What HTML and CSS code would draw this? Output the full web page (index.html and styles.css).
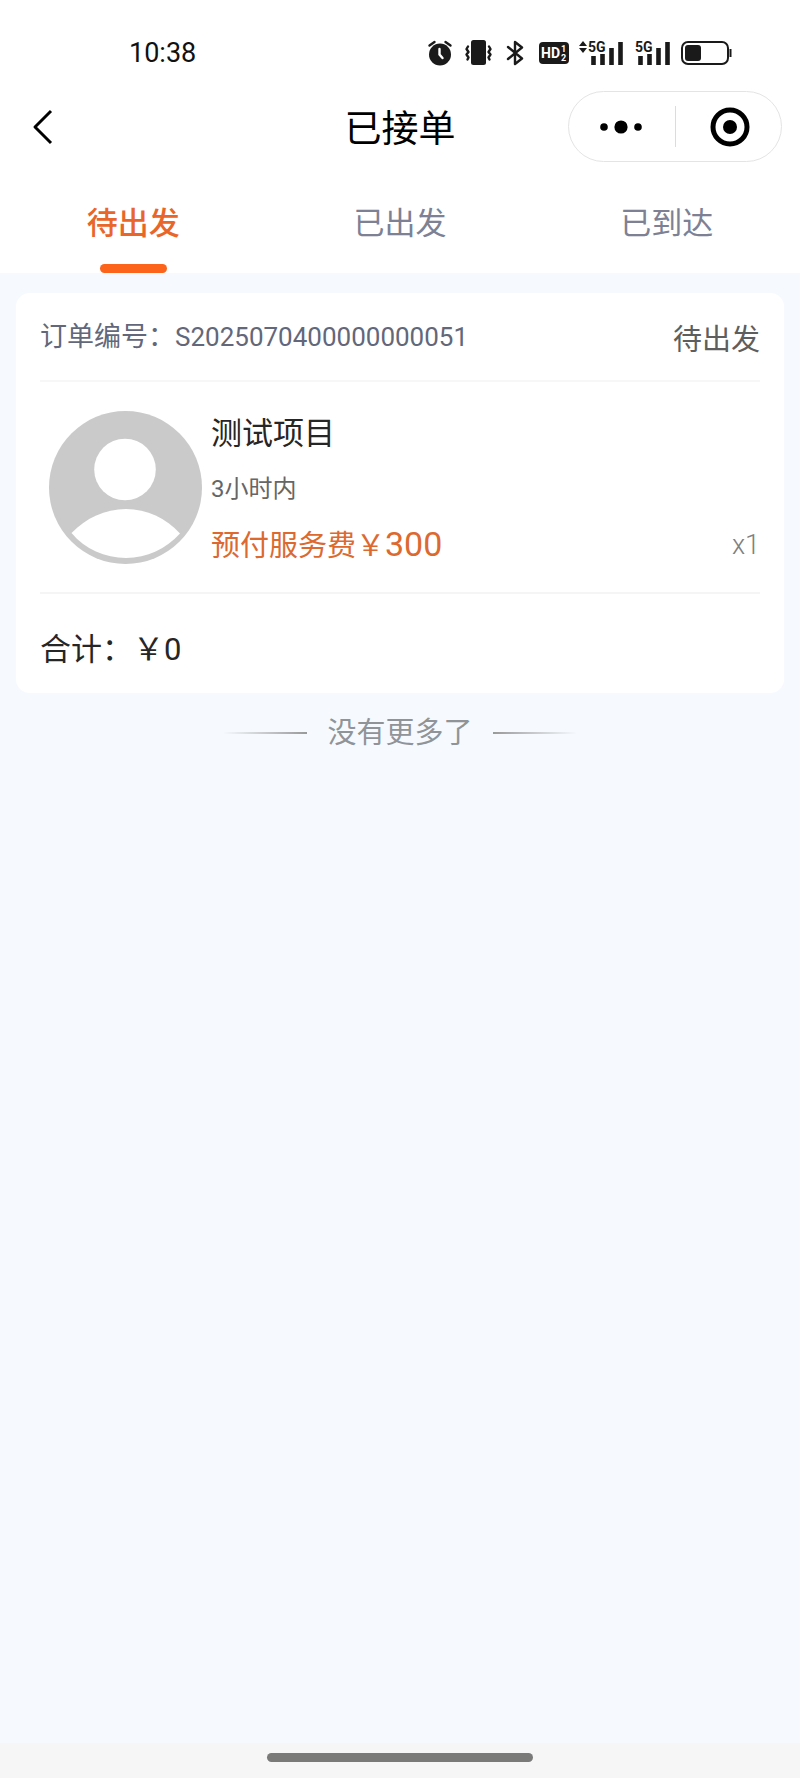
FILE: index.html
```html
<!DOCTYPE html>
<html lang="zh-CN">
<head>
<meta charset="utf-8">
<meta name="viewport" content="width=device-width, initial-scale=1">
<title>已接单</title>
<link rel="stylesheet" href="styles.css">
</head>
<body>
<div class="status-bar">
  <time class="clock">10:38</time>
  <div class="status-icons">
    <svg class="icon-alarm" width="24" height="26" viewBox="0 0 24 26" aria-hidden="true">
      <circle cx="12" cy="14.500" r="11" fill="#1a1a1a"/>
      <path d="M1.500 5.500 6.500 2M22.500 5.500 17.500 2" stroke="#1a1a1a" stroke-width="2.400" stroke-linecap="round"/>
      <path d="M11.500 9v5.500l3 3.500" stroke="#fff" stroke-width="2.400" fill="none" stroke-linecap="round"/>
    </svg>
    <svg class="icon-vibrate" width="27" height="26" viewBox="0 0 27 26" aria-hidden="true">
      <rect x="6" y="0" width="15" height="25" rx="2.500" fill="#1a1a1a"/>
      <path d="M3 6.500 1.500 9 3.500 12 1.500 14.500 3.500 17.500 2.500 19.500M24 6.500l1.500 2.500-2 3 2 2.500-2 3 1 2" stroke="#1a1a1a" stroke-width="2.400" fill="none" stroke-linecap="round" stroke-linejoin="round"/>
    </svg>
    <svg class="icon-bluetooth" width="18" height="26" viewBox="0 0 18 26" aria-hidden="true">
      <path d="M2 7 16 18.500 9 24V2l7 5.500L2 19" stroke="#1a1a1a" stroke-width="2.400" fill="none" stroke-linecap="round" stroke-linejoin="round"/>
    </svg>
    <svg class="icon-hd" width="30" height="22" viewBox="0 0 30 22" aria-hidden="true">
      <rect width="30" height="22" rx="4" fill="#1a1a1a"/>
      <text class="hd-text" x="2" y="16">HD</text>
      <text class="hd-digit" x="22" y="10">1</text>
      <text class="hd-digit" x="22" y="19">2</text>
    </svg>
    <svg class="icon-signal-first" width="45" height="25" viewBox="0 0 45 25" aria-hidden="true">
      <path d="M0 5 4 0 8 5ZM0 7 4 12 8 7Z" fill="#1a1a1a"/>
      <text class="net-text" x="9" y="11">5G</text>
      <path d="M14.500 15v9M23.500 13v11M32.500 7v17M41.500 1v23" stroke="#1a1a1a" stroke-width="4.600"/>
    </svg>
    <svg class="icon-signal-second" width="36" height="25" viewBox="0 0 36 25" aria-hidden="true">
      <text class="net-text" x="0" y="11">5G</text>
      <path d="M5.500 15v9M14.500 13v11M23.500 7v17M32.500 1v23" stroke="#1a1a1a" stroke-width="4.600"/>
    </svg>
    <svg class="icon-battery" width="51" height="24" viewBox="0 0 51 24" aria-hidden="true">
      <rect x="1" y="1" width="46" height="22" rx="6" fill="none" stroke="#1a1a1a" stroke-width="2"/>
      <rect x="4" y="4" width="16" height="16" rx="3" fill="#1a1a1a"/>
      <path d="M49.500 8v8" stroke="#1a1a1a" stroke-width="2"/>
    </svg>
  </div>
</div>

<header class="nav-bar">
  <button class="back" type="button" aria-label="返回">
    <svg width="20" height="34" viewBox="0 0 20 34" aria-hidden="true"><path d="M18 1 2 17l16 16" fill="none" stroke="#000" stroke-width="3" stroke-linejoin="round"/></svg>
  </button>
  <h1 class="title">已接单</h1>
  <div class="capsule">
    <button class="capsule-button" type="button" aria-label="更多">
      <svg width="42" height="14" viewBox="0 0 42 14" aria-hidden="true"><circle cx="4" cy="7" r="3.800"/><circle cx="21" cy="7" r="6.600"/><circle cx="38" cy="7" r="3.800"/></svg>
    </button>
    <button class="capsule-button" type="button" aria-label="关闭">
      <svg width="40" height="40" viewBox="0 0 40 40" aria-hidden="true"><circle cx="20" cy="20" r="17" fill="none" stroke="#000" stroke-width="5"/><circle cx="20" cy="20" r="7"/></svg>
    </button>
  </div>
</header>

<nav class="tabs">
  <button class="tab active" type="button">待出发</button>
  <button class="tab" type="button">已出发</button>
  <button class="tab" type="button">已到达</button>
</nav>

<main class="content">
  <article class="card">
    <div class="order-head">
      <span class="order-label">订单编号：<span class="order-number">S2025070400000000051</span></span>
      <span class="order-state">待出发</span>
    </div>
    <div class="order-body">
      <svg class="avatar" width="153" height="153" viewBox="0 0 153 153" role="img" aria-label="头像">
        <circle cx="76.500" cy="76.500" r="76.500" fill="#cacaca"/>
        <circle cx="76" cy="58.500" r="30.800" fill="#fff"/>
        <path d="M22.500 122C37 107 56 98 77 98s40 9 54 24.500C117 138 98 147 77 147s-41-9-54.500-25Z" fill="#fff"/>
      </svg>
      <div class="details">
        <h2 class="name">测试项目</h2>
        <p class="duration">3小时内</p>
        <div class="price-row">
          <p class="price">预付服务费￥<span class="amount">300</span></p>
          <span class="count">x1</span>
        </div>
      </div>
    </div>
    <p class="total">合计：￥0</p>
  </article>
  <p class="end">没有更多了</p>
</main>

<footer class="home-area"><div class="home-pill"></div></footer>
</body>
</html>
```
FILE: styles.css
```css
* {
  box-sizing: border-box;
}

body {
  margin: 0;
  min-height: 100vh;
  display: flex;
  flex-direction: column;
  background: #f6faff;
  color: #262626;
  font-family: Roboto, "Noto Sans CJK SC", sans-serif;
}

h1,
h2,
p {
  margin: 0;
  font-weight: 400;
}

button {
  padding: 0;
  border: 0;
  background: none;
  font: inherit;
  color: inherit;
}

svg {
  display: block;
  flex: none;
  overflow: visible;
}

.status-bar {
  display: flex;
  align-items: center;
  justify-content: space-between;
  height: 89px;
  padding: 17px 68px 0 129px;
  background: #fff;
}

.clock {
  font-size: 27px;
  color: #111;
}

.status-icons {
  display: flex;
  align-items: center;
}

.icon-vibrate {
  margin-left: 13px;
}

.icon-bluetooth {
  margin-left: 14px;
}

.icon-hd {
  margin-left: 15px;
}

.icon-signal-first {
  margin-left: 10px;
}

.icon-signal-second {
  margin-left: 11px;
}

.icon-battery {
  margin-left: 10px;
}

.hd-text,
.hd-digit {
  fill: #fff;
  font-weight: 700;
  font-size: 14px;
}

.hd-digit {
  font-size: 9px;
}

.net-text {
  fill: #1a1a1a;
  font-weight: 700;
  font-size: 14px;
}

.nav-bar {
  display: grid;
  grid-template-columns: 1fr auto 1fr;
  align-items: center;
  height: 75px;
  padding: 0 18px 0 33px;
  background: #fff;
}

.back {
  justify-self: start;
}

.title {
  padding: 6px 15px 0 0;
  font-size: 37px;
  line-height: 48px;
  color: #000;
}

.capsule {
  justify-self: end;
  display: grid;
  grid-template-columns: 1fr 1fr;
  width: 214px;
  height: 71px;
  border: 1px solid #e4e4e4;
  border-radius: 36px;
}

.capsule-button {
  display: flex;
  align-items: center;
  justify-content: center;
  padding-right: 2px;
}

.capsule-button + .capsule-button {
  margin: 14px 0;
  padding: 0 0 0 2px;
  border-left: 1px solid #dcdcdc;
}

.tabs {
  display: grid;
  grid-template-columns: repeat(3, 1fr);
  height: 109px;
  background: #fff;
}

.tab {
  display: flex;
  flex-direction: column;
  align-items: center;
  justify-content: flex-end;
  gap: 16px;
  font-size: 31px;
  line-height: 48px;
  color: #7d8193;
}

.tab::after {
  content: "";
  width: 67px;
  height: 9px;
  border-radius: 5px;
}

.tab.active {
  font-weight: 500;
  color: #e9662b;
}

.tab.active::after {
  background: #fc641c;
}

.content {
  flex: 1;
  padding: 20px 16px;
}

.card {
  padding: 0 24px;
  border-radius: 14px;
  background: #fff;
}

.order-head {
  display: flex;
  align-items: center;
  justify-content: space-between;
  height: 89px;
  border-bottom: 2px solid #f7f7f7;
}

.order-label {
  padding-bottom: 4px;
  font-size: 27px;
  color: #62677a;
}

.order-number {
  font-size: 26px;
}

.order-state {
  font-size: 29px;
  color: #5e5e5e;
}

.order-body {
  display: flex;
  align-items: flex-start;
  gap: 9px;
  padding: 29px 0 26px 9px;
  border-bottom: 2px solid #f5f5f5;
}

.details {
  flex: 1;
  display: flex;
  flex-direction: column;
  gap: 19px;
  padding-top: 3px;
}

.name {
  font-size: 31px;
  line-height: 40px;
}

.duration {
  font-size: 24px;
  line-height: 32px;
  color: #666;
}

.price-row {
  display: flex;
  align-items: center;
  justify-content: space-between;
  line-height: 40px;
}

.price {
  font-size: 29px;
  color: #dc6a30;
}

.amount {
  font-size: 34px;
}

.count {
  font-size: 27px;
  font-weight: 300;
  color: #808080;
}

.total {
  padding: 36px 0 23px;
  font-size: 31px;
  line-height: 40px;
}

.end {
  display: flex;
  align-items: center;
  justify-content: center;
  gap: 20px;
  padding-top: 19px;
  font-size: 29px;
  line-height: 42px;
  color: #909499;
}

.end::before,
.end::after {
  content: "";
  width: 84px;
  height: 2px;
  background: linear-gradient(to right, transparent, #999);
}

.end::after {
  background: linear-gradient(to left, transparent, #999);
}

.home-area {
  display: flex;
  justify-content: center;
  height: 35px;
  padding-top: 10px;
  background: #f6f6f6;
}

.home-pill {
  width: 33.3%;
  height: 9px;
  border-radius: 5px;
  background: #7a7a78;
}
```
